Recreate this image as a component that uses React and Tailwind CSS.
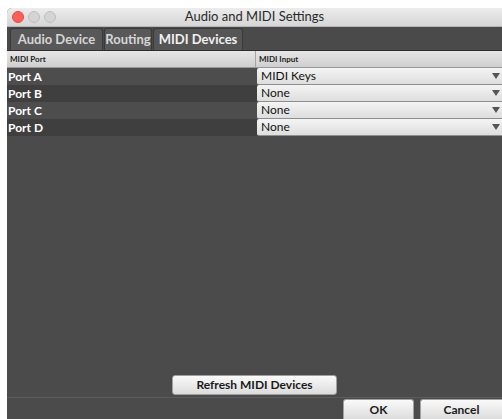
import React from "react";

const ports = [
  { name: "Port A", input: "MIDI Keys" },
  { name: "Port B", input: "None" },
  { name: "Port C", input: "None" },
  { name: "Port D", input: "None" },
];

const tabs = [
  { label: "Audio Device", w: "w-[93px]" },
  { label: "Routing", w: "w-[48px]" },
  { label: "MIDI Devices", w: "w-[90px]" },
];

const font = { fontFamily: 'Lato, "Liberation Sans", sans-serif' };

const Caret = () => (
  <svg width="8" height="6" viewBox="0 0 8 6" className="shrink-0">
    <path d="M0 0 H8 L4 6 Z" fill="#555" />
  </svg>
);

const MidiSettings = () => {
  return (
    <div className="w-[502px] h-[419px] bg-white pl-[7px] pt-[8px] overflow-hidden" style={font}>
      <div className="h-full flex flex-col bg-[#4a4a4a] rounded-tl-[5px] overflow-hidden">
        {/* title bar */}
        <div className="h-[19px] shrink-0 relative flex items-center justify-center bg-gradient-to-b from-[#ececec] to-[#d6d6d6] border-b border-[#b5b5b5]">
          <div className="absolute left-[5px] top-[3px] flex gap-[4px]">
            <span className="w-[12px] h-[12px] rounded-full bg-[#fc5f57] border border-[#df4a43]" />
            <span className="w-[12px] h-[12px] rounded-full bg-[#d4d4d4] border border-[#bdbdbd]" />
            <span className="w-[12px] h-[12px] rounded-full bg-[#d4d4d4] border border-[#bdbdbd]" />
          </div>
          <span className="text-[13px] text-[#2a2a2a]">Audio and MIDI Settings</span>
        </div>

        {/* tabs */}
        <div className="h-[24px] shrink-0 flex items-end pl-[3px] gap-[1px] border-b border-[#2e2e2e]">
          {tabs.map((t, i) => (
            <div
              key={t.label}
              className={`${t.w} h-[22px] flex items-center justify-center text-[13px] font-bold rounded-t-[3px] border border-b-0 border-[#3a3a3a] ${
                i === 2 ? "bg-[#555555] text-[#f0f0f0]" : "bg-[#585858] text-[#d6d6d6]"
              }`}
            >
              {t.label}
            </div>
          ))}
        </div>

        {/* table */}
        <div className="flex-1 flex flex-col bg-[#4b4b4b]">
          <div className="h-[17px] flex shrink-0 bg-gradient-to-b from-[#e6e6e6] to-[#cfcfcf] border-b border-[#9a9a9a] text-[8px] font-bold text-[#222]">
            <div className="w-[249px] flex items-center pl-[3px] border-r border-[#a5a5a5]">MIDI Port</div>
            <div className="flex-1 flex items-center pl-[3px]">MIDI Input</div>
          </div>
          {ports.map((p, i) => (
            <div
              key={p.name}
              className={`h-[17px] flex ${i % 2 === 0 ? "bg-[#4d4d4d]" : "bg-[#3f3f3f]"}`}
            >
              <div className="w-[250px] flex items-center pl-[1px] text-[12px] font-bold text-white">
                {p.name}
              </div>
              <div className="flex-1 flex items-center justify-between pl-[4px] pr-[2px] bg-gradient-to-b from-[#f4f4f4] to-[#dedede] border-b border-[#8e8e8e] rounded-l-[2px] text-[12px] text-[#111]">
                <span>{p.input}</span>
                <Caret />
              </div>
            </div>
          ))}
          <div className="flex-1" />
          <div className="flex justify-center pb-[2px] border-b border-[#5c5c5c]">
            <button className="w-[165px] h-[20px] rounded-[3px] bg-gradient-to-b from-[#fafafa] to-[#dcdcdc] border border-[#a0a0a0] text-[12px] font-bold text-[#1a1a1a]">
              Refresh MIDI Devices
            </button>
          </div>
          <div className="h-[21px] flex justify-end items-end gap-[6px]">
            <button className="w-[71px] h-[20px] rounded-t-[3px] bg-gradient-to-b from-[#fafafa] to-[#dcdcdc] border border-[#a0a0a0] border-b-0 text-[12px] font-bold text-[#1a1a1a]">
              OK
            </button>
            <button className="w-[82px] h-[20px] rounded-tl-[3px] bg-gradient-to-b from-[#fafafa] to-[#dcdcdc] border border-[#a0a0a0] border-b-0 border-r-0 text-[12px] font-bold text-[#1a1a1a]">
              Cancel
            </button>
          </div>
        </div>
      </div>
    </div>
  );
};

export default function App() {
  return <MidiSettings />;
}
